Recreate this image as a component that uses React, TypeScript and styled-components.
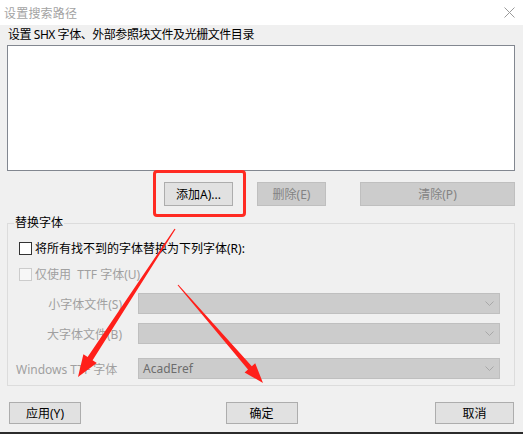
import React from "react"
import styled, { createGlobalStyle } from "styled-components"

const GlobalStyle = createGlobalStyle`
  html, body {
    margin: 0;
    padding: 0;
    background: #f0f0f0;
  }
  body {
    font-family: "Noto Sans", "Noto Sans CJK SC", sans-serif;
    font-size: 12px;
    color: #000;
  }
`

const Window = styled.div`
  position: relative;
  width: 523px;
  height: 434px;
  box-sizing: border-box;
  display: flex;
  flex-direction: column;
  background: #f0f0f0;
  border-bottom: 2px solid #2b2b2b;
  overflow: hidden;
`

const TitleBar = styled.div`
  height: 25px;
  flex: none;
  display: flex;
  align-items: center;
  justify-content: space-between;
  padding: 0 8px 0 4px;
  background: #fff;
`

const Title = styled.span`
  font-size: 12px;
  color: #a3a3a3;
  letter-spacing: 0.2px;
`

const Body = styled.div`
  flex: 1;
  display: flex;
  flex-direction: column;
  padding: 0 8px 0 7px;
`

const SectionLabel = styled.div`
  height: 20px;
  line-height: 20px;
  padding-left: 1px;
  letter-spacing: -0.45px;
`

const ListBox = styled.div`
  height: 126px;
  box-sizing: border-box;
  background: #fff;
  border: 1px solid #828790;
`

const ButtonRow = styled.div`
  display: flex;
  align-items: center;
  margin-top: 11px;
  padding-left: 157px;
`

const Button = styled.button<{ $w: number; $h?: number; $ml?: number }>`
  width: ${(p) => p.$w}px;
  height: ${(p) => p.$h ?? 24}px;
  margin: 0 0 0 ${(p) => p.$ml ?? 0}px;
  padding: 0;
  box-sizing: border-box;
  font-family: "Noto Sans", "Noto Sans CJK SC", sans-serif;
  font-size: 12px;
  color: #000;
  background: #e1e1e1;
  border: 1px solid #adadad;
  border-radius: 0;
  &:disabled {
    color: #838383;
    background: #cccccc;
    border-color: #bfbfbf;
  }
`

const Highlight = styled.span`
  position: relative;
  display: inline-flex;
  &::after {
    content: "";
    position: absolute;
    inset: -12px -13px -11px -11px;
    border: 3px solid #ff2b22;
    border-radius: 4px;
    pointer-events: none;
  }
`

const GroupBox = styled.div`
  position: relative;
  margin-top: 17px;
  height: 163px;
  box-sizing: border-box;
  border: 1px solid #dcdcdc;
  display: flex;
  flex-direction: column;
  padding-top: 14px;
`

const GroupLabel = styled.span`
  position: absolute;
  top: -9px;
  left: 6px;
  padding: 0 1px;
  line-height: 16px;
  background: #f0f0f0;
`

const CheckRow = styled.label<{ $disabled?: boolean; $mt?: number }>`
  display: flex;
  align-items: center;
  height: 20px;
  margin-top: ${(p) => p.$mt ?? 0}px;
  padding-left: 11px;
  color: ${(p) => (p.$disabled ? "#a0a0a0" : "#000")};
`

const CheckBox = styled.span<{ $disabled?: boolean }>`
  width: 13px;
  height: 13px;
  box-sizing: border-box;
  margin-right: 3px;
  background: ${(p) => (p.$disabled ? "#f7f7f7" : "#fff")};
  border: 1px solid ${(p) => (p.$disabled ? "#cccccc" : "#333")};
`

const FieldRow = styled.div<{ $mt: number }>`
  display: flex;
  align-items: center;
  height: 21px;
  margin-top: ${(p) => p.$mt}px;
`

const FieldLabel = styled.span<{ $align: "left" | "right" }>`
  width: 114px;
  box-sizing: border-box;
  padding: ${(p) => (p.$align === "left" ? "0 0 0 8px" : "0")};
  text-align: ${(p) => p.$align};
  color: #a0a0a0;
  white-space: nowrap;
`

const Combo = styled.div`
  margin-left: 16px;
  width: 362px;
  height: 21px;
  box-sizing: border-box;
  display: flex;
  align-items: center;
  justify-content: space-between;
  padding: 0 5px 0 4px;
  background: #cccccc;
  border: 1px solid #bfbfbf;
  color: #6d6d6d;
`

const Footer = styled.div`
  display: grid;
  grid-template-columns: 1fr auto 1fr;
  align-items: center;
  margin: 16px -8px 0 -6px;
  padding: 0 9px 0 8px;
`

const FooterCell = styled.div<{ $justify: string }>`
  display: flex;
  justify-content: ${(p) => p.$justify};
`

const Overlay = styled.svg`
  position: absolute;
  left: 0;
  top: 0;
  pointer-events: none;
`

const Chevron = () => (
  <svg width="9" height="5" viewBox="0 0 9 5">
    <path d="M0.5 0.5 L4.5 4.5 L8.5 0.5" fill="none" stroke="#a8a8a8" strokeWidth="1" />
  </svg>
)

const CloseIcon = () => (
  <svg width="11" height="11" viewBox="0 0 11 11">
    <path d="M0.5 0.5 L10.5 10.5 M10.5 0.5 L0.5 10.5" stroke="#9a9a9a" strokeWidth="1" />
  </svg>
)

export default function App() {
  return (
    <>
      <GlobalStyle />
      <Window>
        <TitleBar>
          <Title>设置搜索路径</Title>
          <CloseIcon />
        </TitleBar>
        <Body>
          <SectionLabel>设置 SHX 字体、外部参照块文件及光栅文件目录</SectionLabel>
          <ListBox />
          <ButtonRow>
            <Highlight>
              <Button $w={69}>添加A)...</Button>
            </Highlight>
            <Button $w={69} $ml={24} disabled>
              删除(E)
            </Button>
            <Button $w={155} $ml={34} disabled>
              清除(P)
            </Button>
          </ButtonRow>
          <GroupBox>
            <GroupLabel>替换字体</GroupLabel>
            <CheckRow>
              <CheckBox />
              将所有找不到的字体替换为下列字体(R):
            </CheckRow>
            <CheckRow $disabled $mt={6}>
              <CheckBox $disabled />
              仅使用&nbsp;&nbsp;TTF 字体(U)
            </CheckRow>
            <FieldRow $mt={9}>
              <FieldLabel $align="right">小字体文件(S)</FieldLabel>
              <Combo>
                <span />
                <Chevron />
              </Combo>
            </FieldRow>
            <FieldRow $mt={9}>
              <FieldLabel $align="right">大字体文件(B)</FieldLabel>
              <Combo>
                <span />
                <Chevron />
              </Combo>
            </FieldRow>
            <FieldRow $mt={14}>
              <FieldLabel $align="left">Windows TTF 字体</FieldLabel>
              <Combo>
                <span>AcadEref</span>
                <Chevron />
              </Combo>
            </FieldRow>
          </GroupBox>
          <Footer>
            <FooterCell $justify="flex-start">
              <Button $w={72} $h={22}>应用(Y)</Button>
            </FooterCell>
            <FooterCell $justify="center">
              <Button $w={72} $h={22}>确定</Button>
            </FooterCell>
            <FooterCell $justify="flex-end">
              <Button $w={79} $h={22}>取消</Button>
            </FooterCell>
          </Footer>
        </Body>
        <Overlay width="523" height="434" viewBox="0 0 523 434">
          <polygon
            fill="#ff1f1a"
            points="175.5,229.3 92.6,360.2 96.8,363.0 78,377 83.4,354.2 87.6,357.0 174.5,228.7"
          />
          <polygon
            fill="#ff1f1a"
            points="178.4,284.7 251.8,366.3 255.2,363.3 263,383 244.6,372.5 248.0,369.5 177.6,285.3"
          />
        </Overlay>
      </Window>
    </>
  )
}
